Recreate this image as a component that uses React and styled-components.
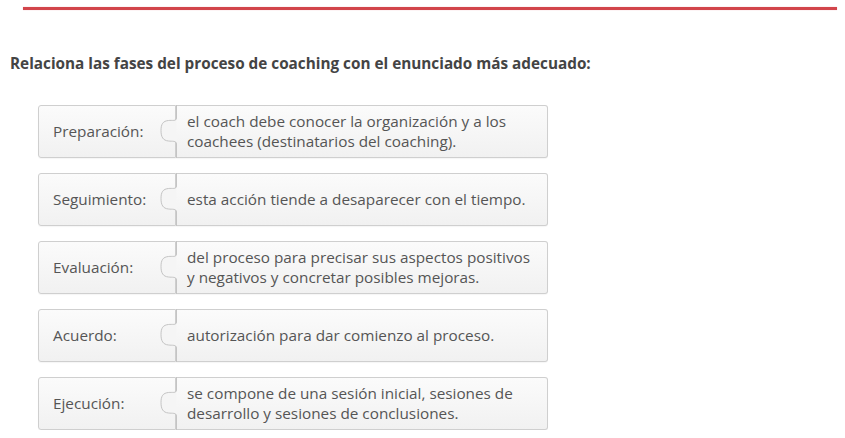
import React from "react";
import styled, { createGlobalStyle } from "styled-components";

const GlobalStyle = createGlobalStyle`
  html, body {
    margin: 0;
    padding: 0;
    background: #ffffff;
  }
  body {
    font-family: "Open Sans", "Liberation Sans", sans-serif;
  }
`;

const Page = styled.div`
  padding-top: 7px;
`;

const Rule = styled.div`
  height: 3px;
  margin: 0 8px 0 23px;
  background: #d2454b;
  box-shadow: 0 0 1px rgba(220, 80, 90, 0.6);
`;

const Title = styled.h2`
  margin: 43px 0 0 10px;
  font-size: 15.3px;
  line-height: 20px;
  font-weight: 700;
  color: #444;
`;

const List = styled.div`
  display: flex;
  flex-direction: column;
  gap: 15px;
  margin: 32px 0 0 38px;
`;

const Row = styled.div`
  display: flex;
  height: 53px;
`;

const Box = styled.div`
  box-sizing: border-box;
  display: flex;
  align-items: center;
  height: 100%;
  padding-bottom: 2px;
  border: 1px solid #cfcfcf;
  background: linear-gradient(#fbfbfb, #f1f1f1);
  box-shadow: 0 1px 1px rgba(0, 0, 0, 0.04);
  color: #555;
  font-size: 15.3px;
  line-height: 20px;
`;

const Term = styled(Box)`
  width: 138px;
  padding-left: 14px;
  border-radius: 3px 0 0 3px;
`;

const Statement = styled(Box)`
  position: relative;
  width: 372px;
  padding-left: 11px;
  padding-right: 10px;
  border-left: none;
  border-radius: 0 3px 3px 0;
`;

const Knob = styled.svg`
  position: absolute;
  left: -17px;
  top: -1px;
  width: 18px;
  height: 53px;
  overflow: visible;
`;

const PuzzleTab = () => (
  <Knob viewBox="0 0 18 53">
    <path
      d="M17.5 0 V13 C17.5 16.5 13 15 9.5 15.5 C4 16 2 19 2 25.5 C2 32 4 35.5 9.5 36 C13 36.5 17.5 35.5 17.5 39 V53"
      fill="#f5f5f5"
      stroke="#c4c4c4"
      strokeWidth="1"
    />
  </Knob>
);

const pairs = [
  {
    term: "Preparación:",
    text: "el coach debe conocer la organización y a los coachees (destinatarios del coaching).",
  },
  { term: "Seguimiento:", text: "esta acción tiende a desaparecer con el tiempo." },
  {
    term: "Evaluación:",
    text: "del proceso para precisar sus aspectos positivos y negativos y concretar posibles mejoras.",
  },
  { term: "Acuerdo:", text: "autorización para dar comienzo al proceso." },
  {
    term: "Ejecución:",
    text: "se compone de una sesión inicial, sesiones de desarrollo y sesiones de conclusiones.",
  },
];

export default function App() {
  return (
    <Page>
      <GlobalStyle />
      <Rule />
      <Title>Relaciona las fases del proceso de coaching con el enunciado más adecuado:</Title>
      <List>
        {pairs.map((p) => (
          <Row key={p.term}>
            <Term>{p.term}</Term>
            <Statement>
              <PuzzleTab />
              {p.text}
            </Statement>
          </Row>
        ))}
      </List>
    </Page>
  );
}
